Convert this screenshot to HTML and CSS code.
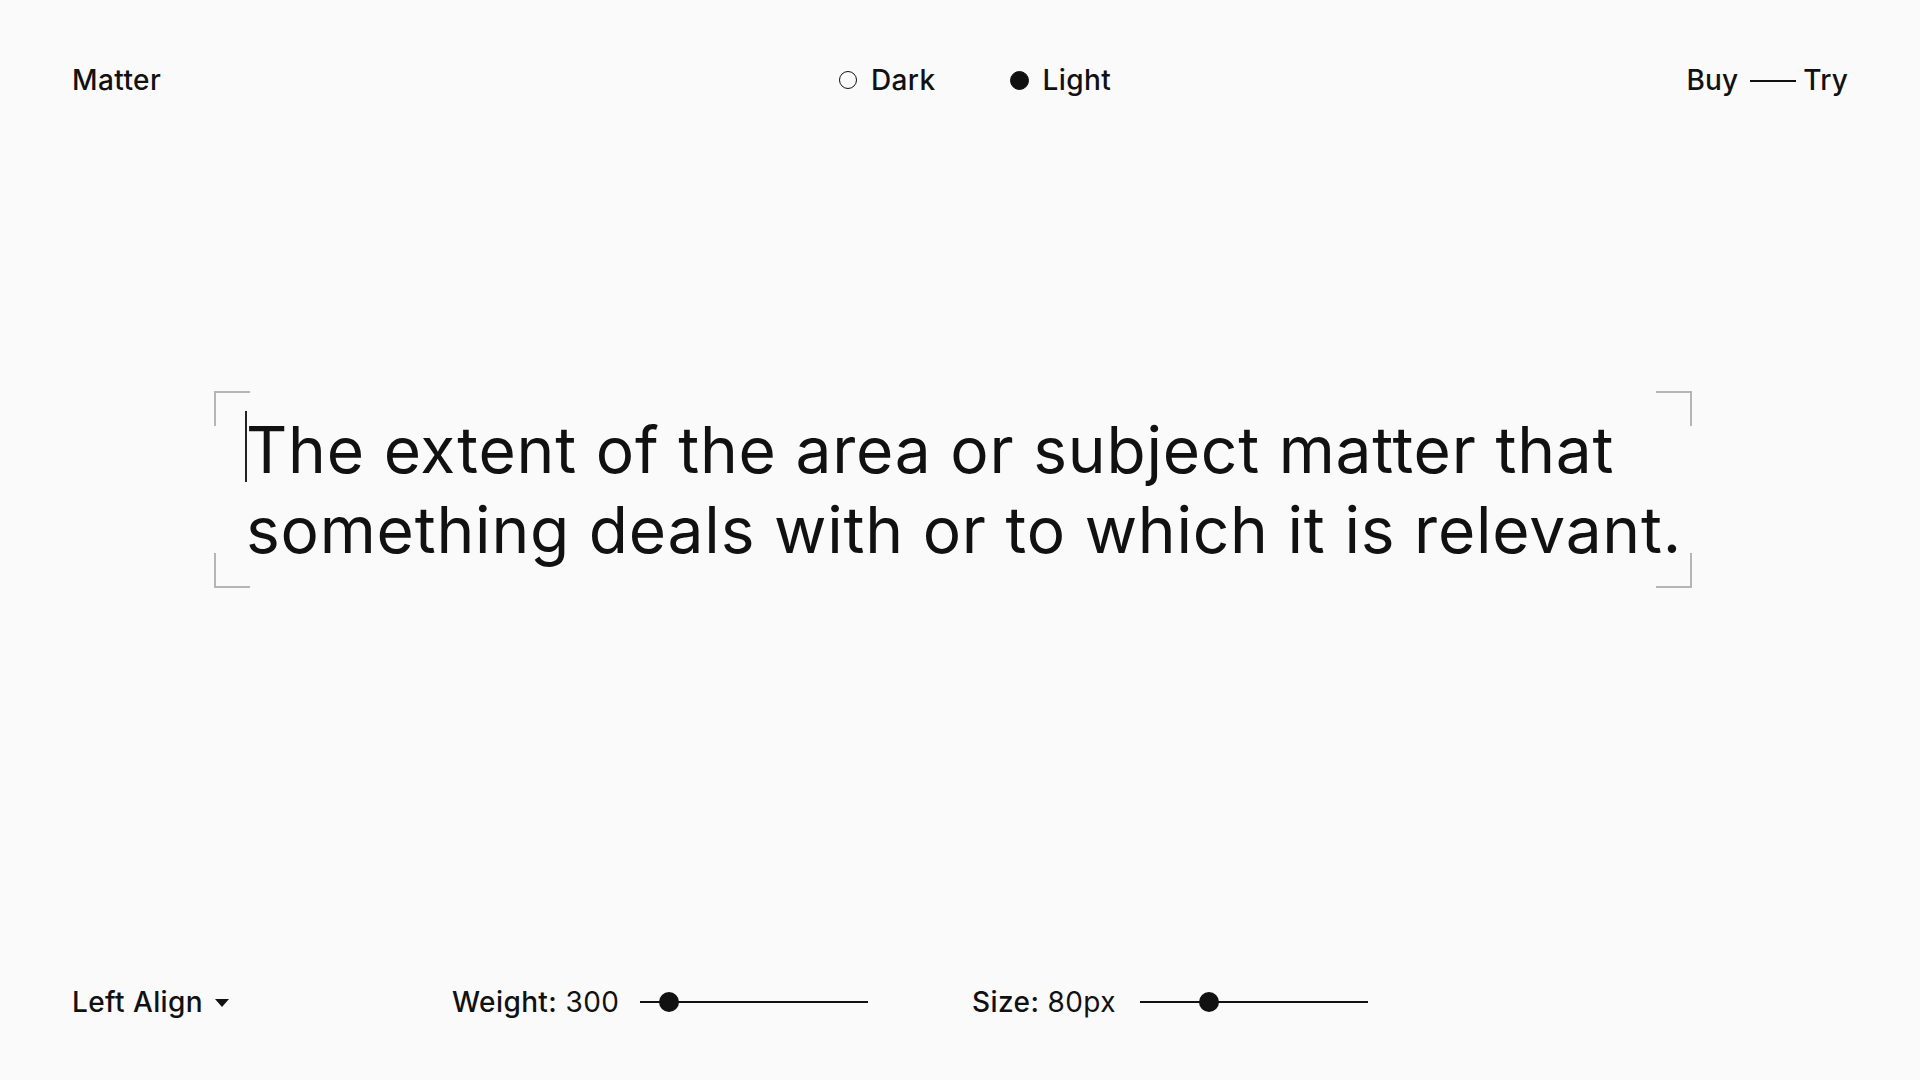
FILE: index.html
```html
<!DOCTYPE html>
<html lang="en">
<head>
  <meta charset="UTF-8" />
  <meta name="viewport" content="width=device-width, initial-scale=1.0"/>
  <title>Matter — Type Tester</title>
  <link rel="stylesheet" href="styles.css">
</head>
<body>

  <!-- Top bar -->
  <header class="topbar">
    <div class="brand">Matter</div>
    <div class="theme-switch">
      <span class="theme-option"><span class="dot"></span>Dark</span>
      <span class="theme-option is-active"><span class="dot"></span>Light</span>
    </div>
    <div class="cta">Buy<span class="dash"></span>Try</div>
  </header>

  <!-- Specimen -->
  <main class="stage">
    <div class="specimen">
      <span class="corner corner-tl"></span>
      <span class="corner corner-tr"></span>
      <span class="corner corner-bl"></span>
      <span class="corner corner-br"></span>
      <span class="caret"></span>
      <p class="specimen-text" contenteditable="true" spellcheck="false">The extent of the area or subject matter that<br>something deals with or to which it is relevant.</p>
    </div>
  </main>

  <!-- Controls -->
  <footer class="controls">
    <div class="control control-align">
      Left Align <span class="arrow"></span>
    </div>
    <div class="control control-weight">
      <span class="readout"><b>Weight:</b> 300</span>
      <div class="slider"><span class="knob" style="left: 19px"></span></div>
    </div>
    <div class="control control-size">
      <span class="readout"><b>Size:</b> 80px</span>
      <div class="slider"><span class="knob" style="left: 59px"></span></div>
    </div>
  </footer>

</body>
</html>
```

FILE: styles.css
```css
* {
  box-sizing: border-box;
}

body {
  margin: 0;
  height: 100vh;
  display: flex;
  flex-direction: column;
  background: #fafafa;
  color: #111;
  font-family: Inter, "Noto Sans", sans-serif;
  overflow: hidden;
}

/* top bar */
.topbar {
  display: grid;
  grid-template-columns: 1fr auto 1fr;
  align-items: center;
  padding: 56px 72px 0;
  height: 104px;
  font-size: 28px;
  font-weight: 500;
  line-height: 48px;
  letter-spacing: 0.4px;
}

.theme-switch {
  display: flex;
  gap: 74px;
  margin-left: 30px;
}

.theme-option {
  display: flex;
  align-items: center;
  gap: 14px;
}

.dot {
  width: 18px;
  height: 18px;
  border: 1.5px solid #111;
  border-radius: 50%;
}

.is-active .dot {
  width: 19px;
  height: 19px;
  background: #111;
}

.cta {
  justify-self: end;
  display: flex;
  align-items: center;
  letter-spacing: 0.2px;
}

.dash {
  width: 46px;
  height: 2px;
  background: #111;
  margin: 2px 7px 0 12px;
}

/* specimen */
.stage {
  flex: 1;
  padding: 287px 0 0 214px;
}

.specimen {
  position: relative;
  width: 1478px;
  padding: 19px 27px 18px 32px;
}

.specimen-text {
  margin: 0;
  font-size: 64px;
  font-weight: 400;
  line-height: 80px;
  letter-spacing: 0.8px;
  white-space: nowrap;
  outline: none;
}

.caret {
  position: absolute;
  left: 31px;
  top: 20px;
  width: 2px;
  height: 71px;
  background: #222;
}

.corner {
  position: absolute;
  width: 36px;
  height: 35px;
  border: 0 solid #b5b5b5;
}
.corner-tl { top: 0; left: 0; border-width: 2.5px 0 0 2.5px; }
.corner-tr { top: 0; right: 0; border-width: 2.5px 2.5px 0 0; }
.corner-bl { bottom: 0; left: 0; border-width: 0 0 2.5px 2.5px; }
.corner-br { bottom: 0; right: 0; border-width: 0 2.5px 2.5px 0; }

/* controls */
.controls {
  display: flex;
  align-items: center;
  height: 102px;
  padding: 0 72px 54px;
  font-size: 28px;
  line-height: 48px;
  letter-spacing: 0.4px;
}

.control {
  display: flex;
  align-items: center;
}

.control-align {
  width: 380px;
  font-weight: 500;
}

.arrow {
  margin-left: 12px;
  margin-top: 2px;
  border-left: 7px solid transparent;
  border-right: 7px solid transparent;
  border-top: 8px solid #111;
}

.control-weight {
  width: 520px;
}

.readout {
  font-weight: 400;
}
.readout b {
  font-weight: 500;
}
.control-weight .readout { width: 188px; }
.control-size .readout { width: 168px; }

.slider {
  position: relative;
  width: 228px;
  height: 2px;
  background: #111;
}

.knob {
  position: absolute;
  top: -9px;
  width: 20px;
  height: 20px;
  border-radius: 50%;
  background: #111;
}
```
